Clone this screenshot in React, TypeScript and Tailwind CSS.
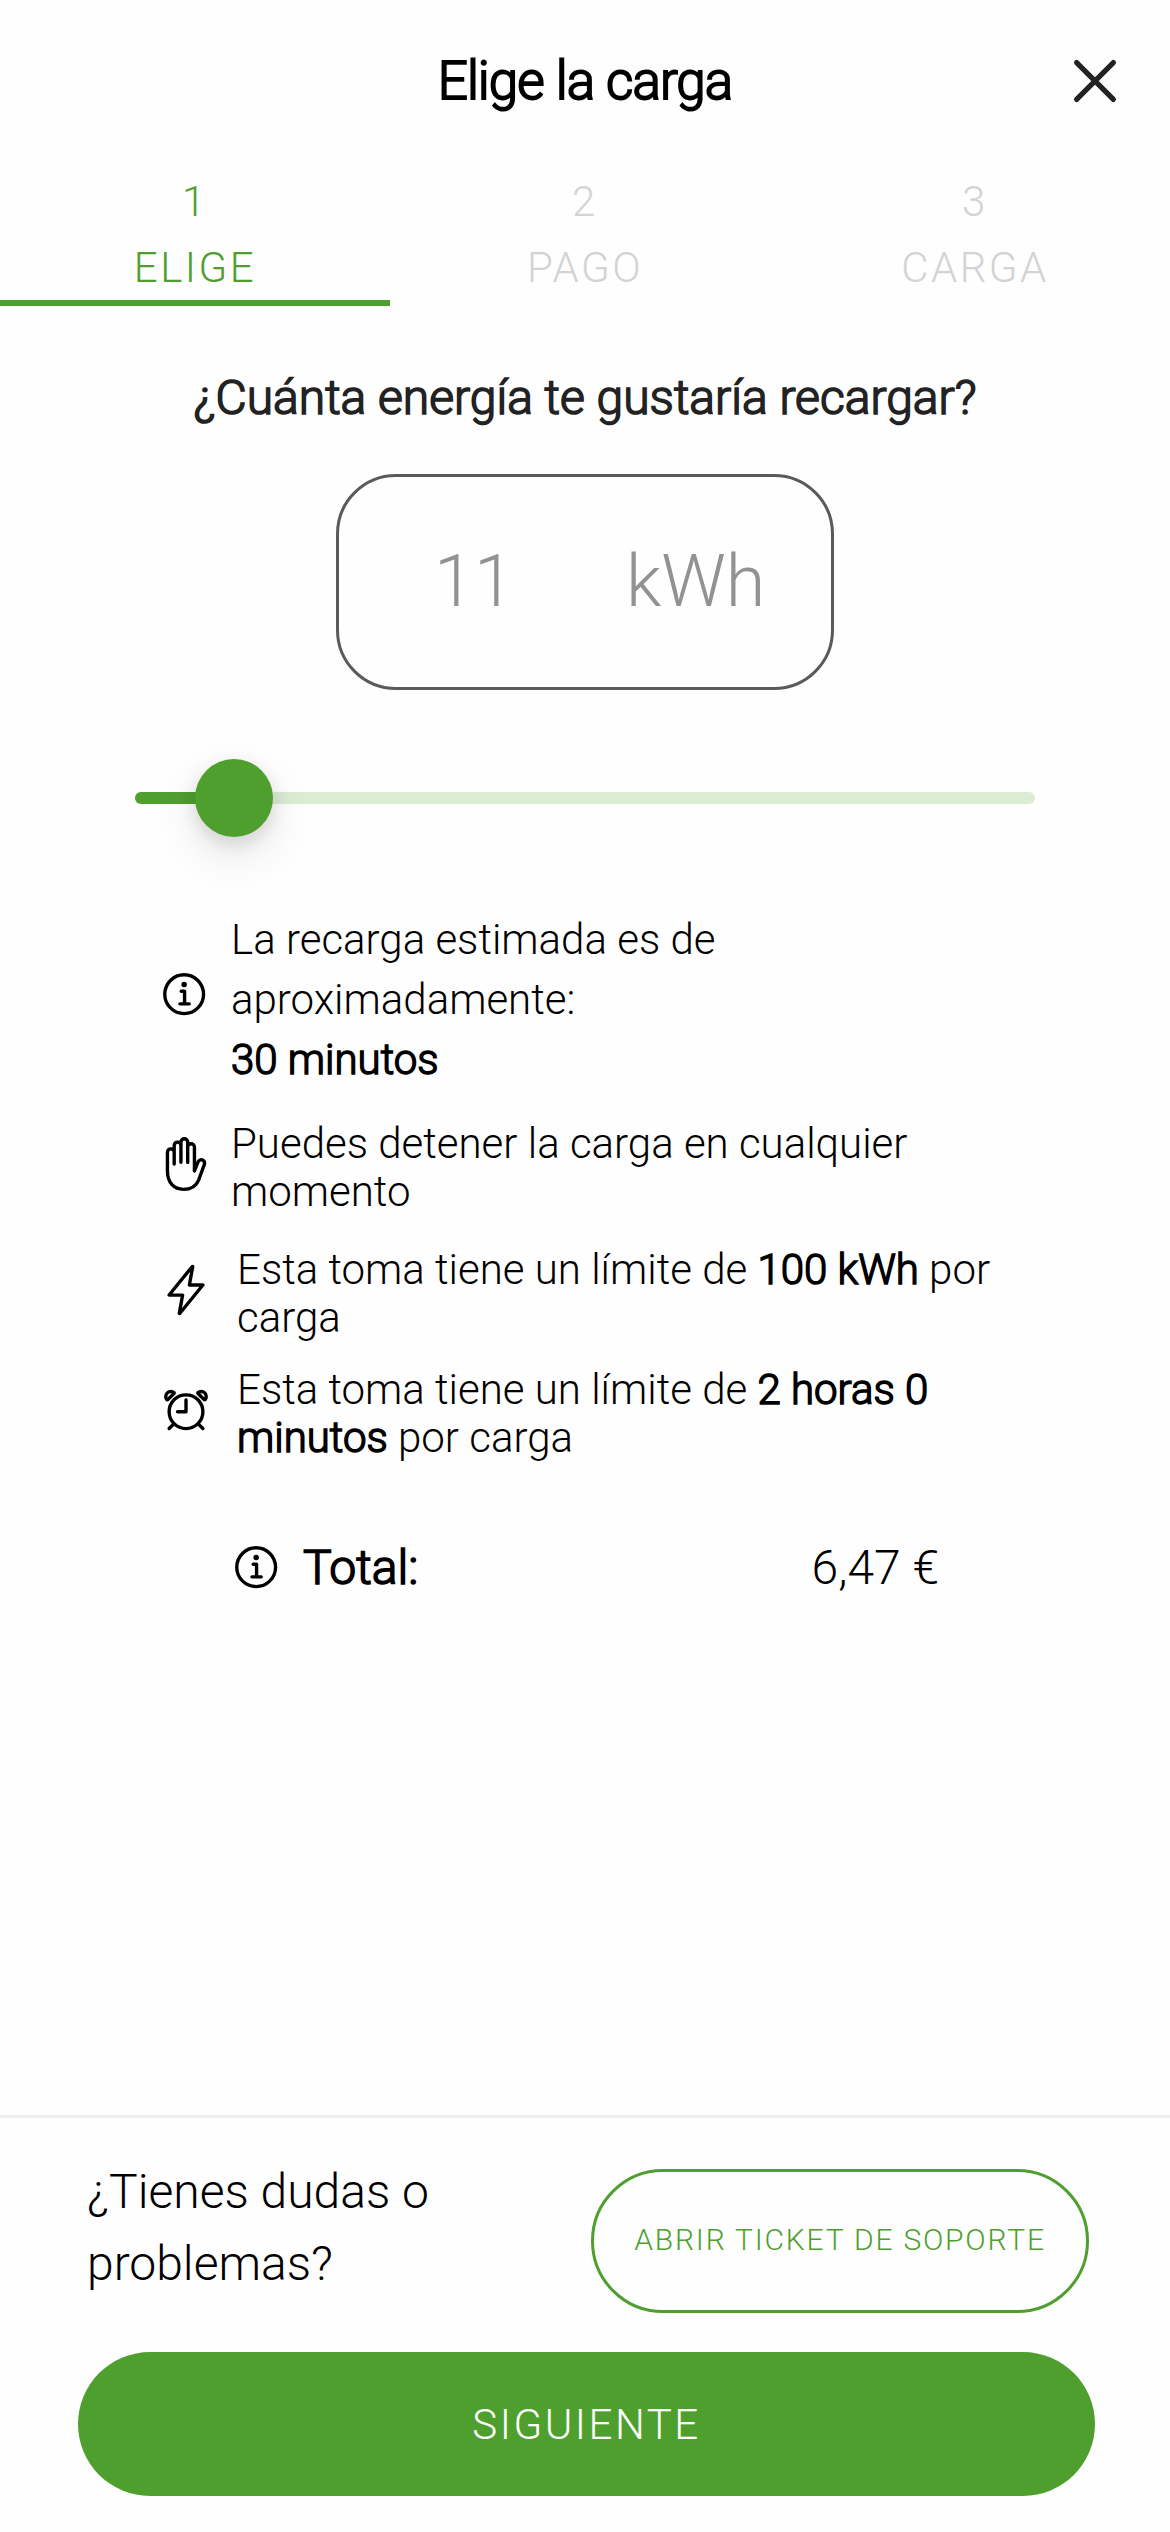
import type { ReactNode } from 'react';
import {
  IoAlarmOutline,
  IoCloseOutline,
  IoFlashOutline,
  IoHandLeftOutline,
  IoInformationCircleOutline,
} from 'react-icons/io5';

const steps = [
  { number: 1, label: 'ELIGE', active: true },
  { number: 2, label: 'PAGO', active: false },
  { number: 3, label: 'CARGA', active: false },
];

function Strong({ children }: { children: ReactNode }) {
  return <span className="[-webkit-text-stroke:1.5px_currentColor]">{children}</span>;
}

function Header() {
  return (
    <header className="relative flex h-[162px] items-center justify-center">
      <h1 className="text-[53px] leading-none tracking-[-0.95px] text-black [-webkit-text-stroke:1.9px_currentColor]">
        Elige la carga
      </h1>
      <button aria-label="Cerrar" className="absolute top-[39px] right-[33px] text-[#222]">
        <IoCloseOutline className="size-[84px]" />
      </button>
    </header>
  );
}

function Steps() {
  return (
    <nav className="grid h-[143px] grid-cols-3">
      {steps.map((s) => (
        <div
          key={s.number}
          className={
            s.active
              ? 'flex flex-col items-center border-b-6 border-[#4f9f2f] pt-[7px] text-[42px] leading-[65px] text-[#4f9f2f]'
              : 'flex flex-col items-center border-b-6 border-transparent pt-[7px] text-[42px] leading-[65px] text-[#d3d3d3]'
          }
        >
          <span className="tracking-[2.5px]">{s.number}</span>
          <span className="pt-px tracking-[2.5px]">{s.label}</span>
        </div>
      ))}
    </nav>
  );
}

function Slider() {
  return (
    <div className="mx-[135px] mt-[69px] flex h-[78px] items-center">
      <div className="relative h-3 w-full rounded-full bg-[#dbecd5]">
        <div className="h-3 w-[99px] rounded-full bg-[#4f9f2f]" />
        <div className="absolute -top-[33px] left-[60px] size-[78px] rounded-full bg-[#4f9f2f] shadow-[0_6px_18px_rgba(0,0,0,0.12),0_18px_45px_rgba(0,0,0,0.1)]" />
      </div>
    </div>
  );
}

function Notes() {
  return (
    <section className="mt-[73px] pl-[158px] text-[42px] leading-[48px] text-black">
      <div className="flex h-[180px]">
        <IoInformationCircleOutline className="mt-[58px] size-[54px]" />
        <p className="ml-[19px] leading-[60px]">
          La recarga estimada es de
          <br />
          aproximadamente:
          <br />
          <Strong>30 minutos</Strong>
        </p>
      </div>
      <div className="mt-[30px] ml-px flex h-[96px]">
        <IoHandLeftOutline className="mt-[17px] size-[54px]" />
        <p className="ml-[18px]">
          Puedes detener la carga en cualquier
          <br />
          momento
        </p>
      </div>
      <div className="mt-[30px] ml-px flex h-[96px]">
        <IoFlashOutline className="mt-[17px] size-[54px]" />
        <p className="ml-[24px]">
          Esta toma tiene un límite de <Strong>100 kWh</Strong> por
          <br />
          carga
        </p>
      </div>
      <div className="mt-[24px] ml-px flex h-[96px]">
        <IoAlarmOutline className="mt-[17px] size-[54px]" />
        <p className="ml-[24px]">
          Esta toma tiene un límite de <Strong>2 horas 0</Strong>
          <br />
          <Strong>minutos</Strong> por carga
        </p>
      </div>
    </section>
  );
}

export default function App() {
  return (
    <main className="flex h-[2532px] w-[1170px] flex-col overflow-hidden bg-[#fefefe] font-['Roboto',sans-serif] font-light">
      <Header />
      <Steps />
      <h2 className="mt-[57px] text-center text-[48px] leading-[72px] text-[#222] [-webkit-text-stroke:1.6px_currentColor]">
        ¿Cuánta energía te gustaría recargar?
      </h2>
      <div className="mt-[40px] ml-[336px] flex h-[216px] w-[498px] items-center rounded-[60px] border-3 border-[#5a5a5a] text-[72px] text-[#929292]">
        <span className="ml-[95px] w-[192px]">11</span>
        <span>kWh</span>
      </div>
      <Slider />
      <Notes />
      <div className="mt-[70px] flex h-[72px] items-center pr-[231px] pl-[230px] text-[48px] text-black">
        <IoInformationCircleOutline className="size-[54px]" />
        <span className="ml-[19px] [-webkit-text-stroke:1.6px_currentColor]">Total:</span>
        <span className="ml-auto">6,47 €</span>
      </div>
      <footer className="mt-auto h-[417px] border-t-3 border-[#ededed] px-[78px] pt-[38px]">
        <div className="flex items-start justify-between pr-[3px] pl-[9px]">
          <p className="text-[48px] leading-[72px] text-black">
            ¿Tienes dudas o
            <br />
            problemas?
          </p>
          <button className="mt-[13px] h-[144px] w-[498px] rounded-full border-3 border-[#4f9f2f] pb-[4px] text-[30px] tracking-[1.8px] text-[#4f9f2f]">
            ABRIR TICKET DE SOPORTE
          </button>
        </div>
        <button className="mt-[39px] h-[144px] w-[1017px] rounded-full bg-[#4f9f2f] text-[42px] tracking-[2.5px] text-white">
          SIGUIENTE
        </button>
      </footer>
    </main>
  );
}
